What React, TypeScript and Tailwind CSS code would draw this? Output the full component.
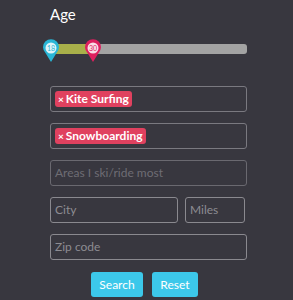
function Pin({ label, color }: { label: string; color: string }) {
  return (
    <svg width="18" height="24" viewBox="0 0 18 24" className="block">
      <path d="M9 23 L3.5 14 A8 8 0 1 1 14.5 14 Z" fill={color} />
      <circle cx="9" cy="9" r="5.5" fill="#ffffff" opacity="0.85" />
      <text x="9" y="11.5" textAnchor="middle" fontSize="7" fill={color} fontFamily="Lato, sans-serif">
        {label}
      </text>
    </svg>
  )
}

function Tag({ label }: { label: string }) {
  return (
    <span className="inline-flex items-center h-[16px] px-[3px] rounded-[3px] bg-[#e0415f] text-white text-[12px] font-bold leading-none">
      <span className="text-[10px] mr-[2px]">×</span>
      {label}
    </span>
  )
}

export default function App() {
  return (
    <div
      className="w-[293px] h-[300px] bg-[#38373f] text-white overflow-hidden"
      style={{ fontFamily: 'Lato, "Open Sans", sans-serif' }}
    >
      <div className="pl-[50px] pr-[46px] pt-[4px]">
        <div className="text-[15px] leading-[20px] text-white">Age</div>

        <div className="relative mt-[20px] h-[10px] rounded-[3px] bg-[#a3a3a3]">
          <div className="absolute left-0 top-0 h-full w-[43px] rounded-l-[3px] bg-[#a9b04a]" />
          <div className="absolute left-[-8px] top-[-5px]">
            <Pin label="18" color="#29b6d6" />
          </div>
          <div className="absolute left-[34px] top-[-5px]">
            <Pin label="30" color="#dd1f5e" />
          </div>
        </div>

        <div className="mt-[32px] flex flex-col gap-[11px]">
          <div className="h-[26px] border border-[#7a7980] rounded-[3px] flex items-center px-[4px]">
            <Tag label="Kite Surfing" />
          </div>
          <div className="h-[26px] border border-[#7a7980] rounded-[3px] flex items-center px-[4px]">
            <Tag label="Snowboarding" />
          </div>
          <div className="h-[26px] border border-[#6a6970] rounded-[3px] flex items-center px-[4px] text-[12px] text-[#6e6d74]">
            Areas I ski/ride most
          </div>
          <div className="flex gap-[7px] pr-[2px]">
            <div className="w-[128px] h-[26px] border border-[#8a898f] rounded-[3px] flex items-center px-[4px] text-[12px] text-[#8d8c92]">
              City
            </div>
            <div className="flex-1 h-[26px] border border-[#8a898f] rounded-[3px] flex items-center px-[4px] text-[12px] text-[#8d8c92]">
              Miles
            </div>
          </div>
          <div className="h-[26px] border border-[#8a898f] rounded-[3px] flex items-center px-[4px] text-[12px] text-[#8d8c92]">
            Zip code
          </div>
        </div>

        <div className="mt-[12px] flex justify-center gap-[9px] pr-[8px]">
          <button className="w-[52px] h-[25px] rounded-[3px] bg-[#3cc8ea] text-white text-[12px]">Search</button>
          <button className="w-[46px] h-[25px] rounded-[3px] bg-[#3cc8ea] text-white text-[12px]">Reset</button>
        </div>
      </div>
    </div>
  )
}
